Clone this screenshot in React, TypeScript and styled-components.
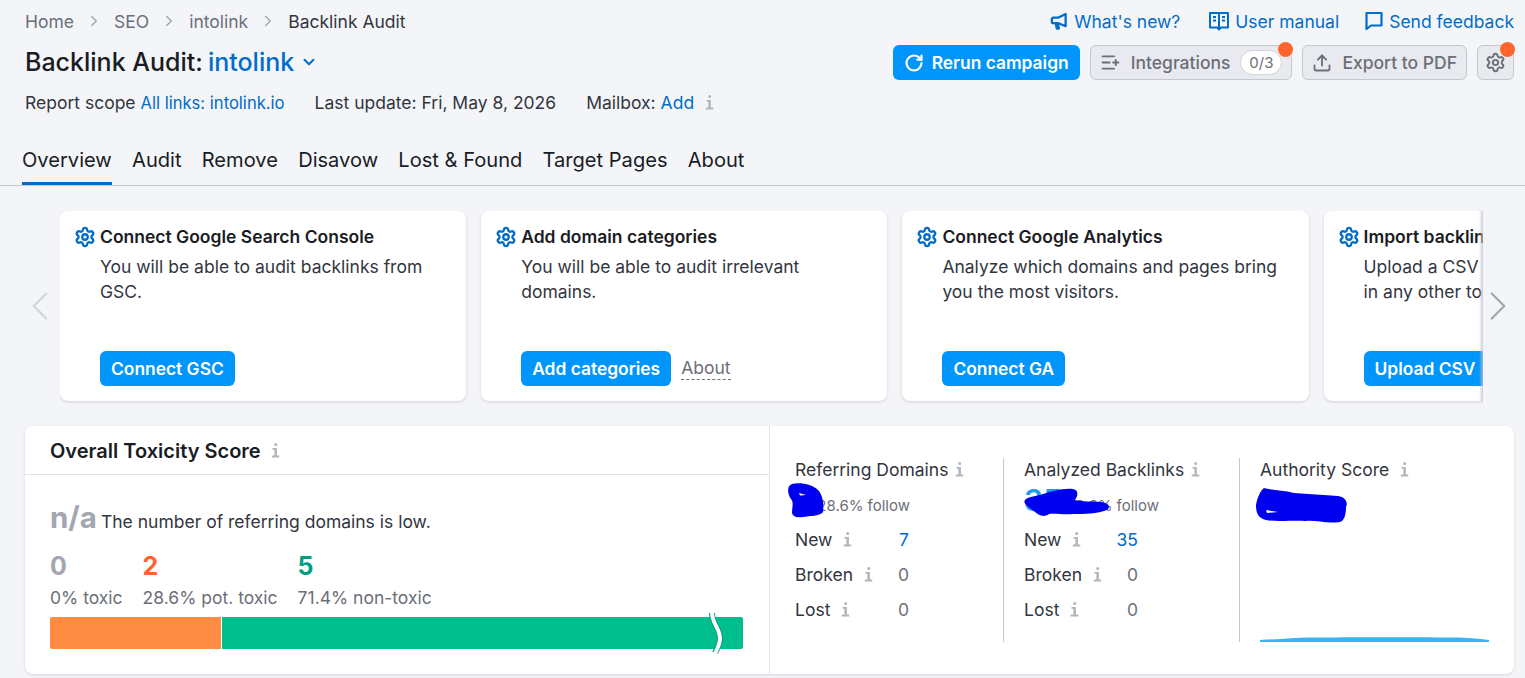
import React from "react"
import styled, { createGlobalStyle } from "styled-components"
import { ChevronDown, ChevronLeft, ChevronRight, ListPlus, RotateCw, Settings, Upload } from "lucide-react"

const GlobalStyle = createGlobalStyle`
  html, body {
    margin: 0;
    padding: 0;
    background: #f4f5f9;
  }
  body {
    font-family: Inter, "Liberation Sans", sans-serif;
    font-size: 17.5px;
    color: #1a1c24;
    overflow: hidden;
  }
`

const Page = styled.div`
  width: 1525px;
  height: 678px;
  overflow: hidden;
`

const Header = styled.header`
  display: flex;
  justify-content: space-between;
  padding: 10px 11px 0 25px;
  height: 125px;
  box-sizing: border-box;
`

const HeaderLeft = styled.div`
  display: flex;
  flex-direction: column;
`

const Breadcrumbs = styled.nav`
  display: flex;
  align-items: center;
  height: 22px;
  color: #6c6e79;
`

const Crumb = styled.span<{ $current?: boolean }>`
  color: ${(p) => (p.$current ? "#33353f" : "#6c6e79")};
`

const CrumbSeparator = styled(ChevronRight)`
  color: #a4a6b0;
  margin: 0 11px;
`

const Title = styled.h1`
  display: flex;
  align-items: center;
  margin: 13px 0 0;
  height: 34px;
  font-size: 25px;
  font-weight: 500;
  color: #1a1c24;
`

const TitleLink = styled.span`
  color: #006dca;
  margin-left: 5px;
`

const TitleChevron = styled(ChevronDown)`
  color: #006dca;
  margin-left: 6px;
`

const Meta = styled.div`
  display: flex;
  align-items: center;
  height: 22px;
  margin-top: 12px;
  color: #33353f;
`

const MetaItem = styled.span`
  margin-right: 30px;
`

const MetaLink = styled.span`
  color: #006dca;
`

const ScopeLink = styled(MetaLink)`
  font-size: 16.6px;
`

const MetaInfo = styled.span`
  display: flex;
  margin-left: 11px;
`

const HeaderRight = styled.div`
  display: flex;
  flex-direction: column;
  align-items: flex-end;
`

const TopLinks = styled.div`
  display: flex;
  align-items: center;
  gap: 26px;
  height: 22px;
`

const TopLink = styled.a`
  display: flex;
  align-items: center;
  gap: 6px;
  color: #006dca;

  &:first-child {
    margin-right: 3px;
  }
`

const Actions = styled.div`
  display: flex;
  gap: 10px;
  margin-top: 13px;
`

const PrimaryAction = styled.button`
  display: flex;
  align-items: center;
  gap: 8px;
  height: 35px;
  padding: 0 11px;
  border: 0;
  border-radius: 6px;
  background: #0095fa;
  color: #fff;
  font: 600 17.4px Inter, sans-serif;
  white-space: nowrap;
`

const GhostAction = styled.button<{ $compact?: boolean }>`
  position: relative;
  display: flex;
  align-items: center;
  gap: 10px;
  height: 35px;
  padding: 0 ${(p) => (p.$compact ? "7px" : "9px")};
  box-sizing: border-box;
  border: 1px solid #c4c7cf;
  border-radius: 6px;
  background: #e9eaef;
  color: #6c6e79;
  font: 500 17.5px Inter, sans-serif;
  white-space: nowrap;
`

const CountPill = styled.span`
  display: inline-flex;
  align-items: center;
  justify-content: center;
  width: 42px;
  height: 25px;
  box-sizing: border-box;
  border: 1px solid #d1d4db;
  border-radius: 13px;
  background: #fff;
  font-size: 15px;
  font-weight: 400;
  color: #6c6e79;
`

const Dot = styled.span`
  position: absolute;
  top: -4px;
  right: -2px;
  width: 15px;
  height: 15px;
  border-radius: 50%;
  background: #ff642d;
`

const Tabs = styled.nav`
  display: flex;
  gap: 20.2px;
  height: 60px;
  padding-left: 22px;
  border-bottom: 1px solid #c4c7cf;
`

const Tab = styled.a<{ $active?: boolean }>`
  display: flex;
  align-items: center;
  height: 45px;
  padding-top: 12px;
  border-bottom: 3px solid ${(p) => (p.$active ? "#006dca" : "transparent")};
  font-size: 20.1px;
  color: #1a1c24;
`

const Carousel = styled.section`
  display: grid;
  grid-template-columns: 60px 1fr 42px;
  margin-top: 25px;
  height: 193px;
`

const ArrowSlot = styled.div<{ $side: "left" | "right" }>`
  display: flex;
  align-items: center;
  justify-content: center;
  height: 190px;
  padding: ${(p) => (p.$side === "left" ? "0 0 0 20px" : "0 12px 0 0")};
  color: ${(p) => (p.$side === "left" ? "#d1d4db" : "#a4a6b0")};

  svg {
    flex: none;
  }
`

const CardWindow = styled.div`
  position: relative;
  display: flex;
  gap: 15px;
  overflow: hidden;
  padding-bottom: 3px;

  &::after {
    content: "";
    position: absolute;
    top: 0;
    right: 0;
    bottom: 3px;
    width: 4px;
    background: linear-gradient(to right, rgba(190, 192, 200, 0), rgba(190, 192, 200, 0.8));
  }
`

const Card = styled.article`
  flex: 0 0 406.2px;
  display: flex;
  height: 190px;
  padding: 15px 15px 15px 14px;
  box-sizing: border-box;
  gap: 4px;
  border-radius: 8px;
  background: #fff;
  box-shadow: 0 1px 3px rgba(25, 27, 35, 0.16);
`

const CardBody = styled.div`
  display: flex;
  flex: 1 0 auto;
  width: 346px;
  flex-direction: column;
`

const CardIcon = styled(Settings)`
  flex: none;
  color: #006dca;
`

const CardTitle = styled.h3`
  margin: 0;
  font-size: 17.5px;
  line-height: 22px;
  font-weight: 600;
  white-space: nowrap;
  color: #1a1c24;
`

const CardText = styled.p`
  margin: 6px 0 0;
  font-size: 17.5px;
  line-height: 25px;
  white-space: nowrap;
  color: #33353f;
`

const CardActions = styled.div`
  display: flex;
  align-items: center;
  gap: 10px;
  margin-top: auto;
`

const CardButton = styled.button`
  height: 35px;
  padding: 0 11px;
  border: 0;
  border-radius: 6px;
  background: #0095fa;
  color: #fff;
  font: 600 17.4px Inter, sans-serif;
  white-space: nowrap;
`

const DashedLink = styled.span`
  color: #6c6e79;
  line-height: 22px;
  border-bottom: 1px dashed #6c6e79;
`

const Panel = styled.section`
  display: flex;
  height: 248px;
  margin: 22px 11px 0 25px;
  border-radius: 8px;
  background: #fff;
  box-shadow: 0 1px 3px rgba(25, 27, 35, 0.14);
`

const ToxicityColumn = styled.div`
  flex: 0 0 745px;
  box-sizing: border-box;
  border-right: 1px solid #e0e1e9;
`

const ToxicityHeader = styled.div`
  display: flex;
  align-items: center;
  gap: 10px;
  height: 49px;
  box-sizing: border-box;
  padding: 1px 0 0 25px;
  border-bottom: 1px solid #e0e1e9;
`

const ToxicityTitle = styled.h2`
  margin: 0;
  font-size: 20px;
  font-weight: 600;
  color: #1a1c24;
`

const ToxicityBody = styled.div`
  padding: 24px 26px 0 25px;
`

const ScoreLine = styled.div`
  display: flex;
  align-items: baseline;
  gap: 4px;
  height: 38px;
  color: #33353f;
`

const ScoreValue = styled.span`
  font-size: 29.5px;
  font-weight: 700;
  color: #a4a6b0;
`

const Splits = styled.div`
  display: flex;
  gap: 20px;
  margin-top: 14px;
`

const Split = styled.div`
  display: flex;
  flex-direction: column;
`

const SplitCount = styled.span<{ $color: string }>`
  height: 36px;
  line-height: 30px;
  font-size: 25px;
  font-weight: 700;
  color: ${(p) => p.$color};
`

const SplitLabel = styled.span`
  line-height: 22px;
  color: #6c6e79;
`

const Bar = styled.div`
  position: relative;
  display: flex;
  height: 32px;
  margin-top: 8px;
`

const BarPart = styled.div<{ $color: string; $grow?: boolean }>`
  flex: ${(p) => (p.$grow ? "1" : "0 0 171px")};
  margin-left: ${(p) => (p.$grow ? "1px" : "0")};
  background: ${(p) => p.$color};
  border-radius: ${(p) => (p.$grow ? "0 2px 2px 0" : "2px 0 0 2px")};
`

const BarBreak = styled.svg`
  position: absolute;
  left: 658px;
  top: -5px;
`

const StatsArea = styled.div`
  display: flex;
  flex: 1;
  padding: 32px 25px 32px 25px;
`

const StatColumn = styled.div<{ $width: string; $divided?: boolean }>`
  position: relative;
  flex: ${(p) => p.$width};
  box-sizing: border-box;
  padding-left: ${(p) => (p.$divided ? "20px" : "0")};
  border-left: ${(p) => (p.$divided ? "1px solid #c4c7cf" : "0")};
`

const StatHeading = styled.div<{ $gap?: number }>`
  display: flex;
  align-items: center;
  gap: ${(p) => p.$gap ?? 7}px;
  height: 24px;
  margin-top: -1px;
  color: #33353f;
  white-space: nowrap;
`

const FollowLine = styled.div<{ $width: number }>`
  display: flex;
  justify-content: space-between;
  align-items: center;
  width: ${(p) => p.$width}px;
  height: 32px;
  margin-top: 8px;
`

const BigNumber = styled.span`
  margin-top: -10px;
  font-size: 30px;
  font-weight: 600;
  color: #1a9cf0;
`

const FollowText = styled.span`
  font-size: 15px;
  color: #6c6e79;
`

const StatRows = styled.div`
  margin-top: 1px;
`

const StatRow = styled.div`
  display: flex;
  align-items: center;
  justify-content: space-between;
  width: 114px;
  height: 35px;
  color: #33353f;
`

const StatLabel = styled.span`
  display: flex;
  align-items: center;
  gap: 11px;
`

const StatValue = styled.span<{ $link?: boolean }>`
  color: ${(p) => (p.$link ? "#006dca" : "#6c6e79")};
`

const Scribble = styled.svg<{ $left: number; $top: number }>`
  position: absolute;
  left: ${(p) => p.$left}px;
  top: ${(p) => p.$top}px;
  pointer-events: none;
`

const AreaChart = styled.svg`
  position: absolute;
  left: 20px;
  bottom: 0;
`

const InfoIcon = () => (
  <svg width="9" height="15" viewBox="0 0 9 15" fill="#b3b5bd">
    <circle cx="4.7" cy="1.6" r="1.5" />
    <path d="M1.5 5h4.4v7.6h2.3V14.5H.8v-1.9h2.6V6.8H1.5z" />
  </svg>
)

const MegaphoneIcon = () => (
  <svg width="18" height="20" viewBox="0 0 19 20" fill="none" stroke="#006dca" strokeWidth="2.4" strokeLinejoin="round">
    <path d="M16.5 2.5v13L9 12.3H3.6a1.6 1.6 0 0 1-1.6-1.6V8a1.6 1.6 0 0 1 1.6-1.6H9z" />
    <path d="M6 12.5l1.2 5.5h2.2l-.9-5" />
  </svg>
)

const BookIcon = () => (
  <svg width="20" height="20" viewBox="0 0 20 20" fill="none">
    <path d="M1 2h18v14.5h-7l-2 2-2-2H1z" stroke="#006dca" strokeWidth="2" strokeLinejoin="round" />
    <path d="M10 2v15" stroke="#006dca" strokeWidth="2" />
    <path d="M4 6h3M4 9.5h3M13 6h3M13 9.5h3" stroke="#006dca" strokeWidth="2" />
  </svg>
)

const FeedbackIcon = () => (
  <svg width="18" height="20" viewBox="0 0 18 20" fill="none">
    <path d="M1.5 2h15v12.5H6L1.5 18z" stroke="#006dca" strokeWidth="2.2" strokeLinejoin="round" />
  </svg>
)

const cards = [
  {
    title: "Connect Google Search Console",
    text: ["You will be able to audit backlinks from", "GSC."],
    action: "Connect GSC",
  },
  {
    title: "Add domain categories",
    text: ["You will be able to audit irrelevant", "domains."],
    action: "Add categories",
    about: true,
  },
  {
    title: "Connect Google Analytics",
    text: ["Analyze which domains and pages bring", "you the most visitors."],
    action: "Connect GA",
  },
  {
    title: "Import backlinks",
    text: ["Upload a CSV file with backlinks found", "in any other tool."],
    action: "Upload CSV",
  },
]

const tabs = ["Overview", "Audit", "Remove", "Disavow", "Lost & Found", "Target Pages", "About"]

const StatList = ({ newCount }: { newCount: number }) => (
  <StatRows>
    <StatRow>
      <StatLabel>New <InfoIcon /></StatLabel>
      <StatValue $link>{newCount}</StatValue>
    </StatRow>
    <StatRow>
      <StatLabel>Broken <InfoIcon /></StatLabel>
      <StatValue>0</StatValue>
    </StatRow>
    <StatRow>
      <StatLabel>Lost <InfoIcon /></StatLabel>
      <StatValue>0</StatValue>
    </StatRow>
  </StatRows>
)

export default function App() {
  return (
    <Page>
      <GlobalStyle />
      <Header>
        <HeaderLeft>
          <Breadcrumbs>
            <Crumb>Home</Crumb>
            <CrumbSeparator size={18} />
            <Crumb>SEO</Crumb>
            <CrumbSeparator size={18} />
            <Crumb>intolink</Crumb>
            <CrumbSeparator size={18} />
            <Crumb $current>Backlink Audit</Crumb>
          </Breadcrumbs>
          <Title>
            Backlink Audit: <TitleLink>intolink</TitleLink>
            <TitleChevron size={18} strokeWidth={2.6} />
          </Title>
          <Meta>
            <MetaItem>
              Report scope <ScopeLink>All links: intolink.io</ScopeLink>
            </MetaItem>
            <MetaItem>Last update: Fri, May 8, 2026</MetaItem>
            <span>Mailbox: <MetaLink>Add</MetaLink></span>
            <MetaInfo><InfoIcon /></MetaInfo>
          </Meta>
        </HeaderLeft>
        <HeaderRight>
          <TopLinks>
            <TopLink><MegaphoneIcon />What's new?</TopLink>
            <TopLink><BookIcon />User manual</TopLink>
            <TopLink><FeedbackIcon />Send feedback</TopLink>
          </TopLinks>
          <Actions>
            <PrimaryAction>
              <RotateCw size={20} strokeWidth={2.6} />
              Rerun campaign
            </PrimaryAction>
            <GhostAction>
              <ListPlus size={21} strokeWidth={2.2} />
              Integrations
              <CountPill>0/3</CountPill>
              <Dot />
            </GhostAction>
            <GhostAction>
              <Upload size={20} strokeWidth={2.2} />
              Export to PDF
            </GhostAction>
            <GhostAction $compact>
              <Settings size={21} strokeWidth={2.2} />
              <Dot />
            </GhostAction>
          </Actions>
        </HeaderRight>
      </Header>

      <Tabs>
        {tabs.map((tab, i) => (
          <Tab key={tab} $active={i === 0}>{tab}</Tab>
        ))}
      </Tabs>

      <Carousel>
        <ArrowSlot $side="left">
          <ChevronLeft size={50} strokeWidth={1.1} />
        </ArrowSlot>
        <CardWindow>
          {cards.map((card) => (
            <Card key={card.title}>
              <CardIcon size={22} strokeWidth={2.5} />
              <CardBody>
                <CardTitle>{card.title}</CardTitle>
                <CardText>
                  {card.text[0]}
                  <br />
                  {card.text[1]}
                </CardText>
                <CardActions>
                  <CardButton>{card.action}</CardButton>
                  {card.about && <DashedLink>About</DashedLink>}
                </CardActions>
              </CardBody>
            </Card>
          ))}
        </CardWindow>
        <ArrowSlot $side="right">
          <ChevronRight size={50} strokeWidth={1.1} />
        </ArrowSlot>
      </Carousel>

      <Panel>
        <ToxicityColumn>
          <ToxicityHeader>
            <ToxicityTitle>Overall Toxicity Score</ToxicityTitle>
            <InfoIcon />
          </ToxicityHeader>
          <ToxicityBody>
            <ScoreLine>
              <ScoreValue>n/a</ScoreValue>
              The number of referring domains is low.
            </ScoreLine>
            <Splits>
              <Split>
                <SplitCount $color="#a4a6b0">0</SplitCount>
                <SplitLabel>0% toxic</SplitLabel>
              </Split>
              <Split>
                <SplitCount $color="#ff642d">2</SplitCount>
                <SplitLabel>28.6% pot. toxic</SplitLabel>
              </Split>
              <Split>
                <SplitCount $color="#009f81">5</SplitCount>
                <SplitLabel>71.4% non-toxic</SplitLabel>
              </Split>
            </Splits>
            <Bar>
              <BarPart $color="#ff8c43" />
              <BarPart $color="#00bf8f" $grow />
              <BarBreak width="16" height="42" viewBox="0 0 16 42" fill="none">
                <path d="M4 1C4 13 12 15 12 27C12 32 9 37 7 41" stroke="#00a07c" strokeWidth="6" />
                <path d="M4 0C4 13 12 15 12 27C12 32 9 37 7 42" stroke="#fff" strokeWidth="4" />
              </BarBreak>
            </Bar>
          </ToxicityBody>
        </ToxicityColumn>

        <StatsArea>
          <StatColumn $width="0 0 208px">
            <StatHeading>Referring Domains <InfoIcon /></StatHeading>
            <FollowLine $width={115}>
              <BigNumber>7</BigNumber>
              <FollowText>28.6% follow</FollowText>
            </FollowLine>
            <StatList newCount={7} />
            <Scribble $left={-8} $top={25} width="38" height="35" viewBox="0 0 38 35">
              <path d="M5 1C14 -1 26 2 31 7C36 12 37 22 36 29C34 33 22 33 16 34C10 35 6 34 5 30C5 24 7 20 4 16C1 12 -1 3 5 1Z" fill="#0000f0" />
              <path d="M12 10L19 12L13 12.5Z" fill="#fff" />
            </Scribble>
          </StatColumn>
          <StatColumn $width="0 0 236px" $divided>
            <StatHeading>Analyzed Backlinks <InfoIcon /></StatHeading>
            <FollowLine $width={135}>
              <BigNumber>35</BigNumber>
              <FollowText>28.6% follow</FollowText>
            </FollowLine>
            <StatList newCount={35} />
            <Scribble $left={19} $top={30} width="90" height="30" viewBox="0 0 90 30">
              <path d="M3 11C8 8 14 8 20 6C28 4 38 0 50 1C56 2 55 8 52 12C58 14 70 13 78 14C86 15 88 19 84 22C74 26 62 26 50 26C40 27 32 25 26 26C20 30 16 27 12 24C6 19 -2 15 3 11Z" fill="#0000f0" />
            </Scribble>
          </StatColumn>
          <StatColumn $width="1" $divided>
            <StatHeading $gap={11}>Authority Score <InfoIcon /></StatHeading>
            <Scribble $left={16} $top={29} width="92" height="36" viewBox="0 0 92 36">
              <path d="M8 1C14 3 26 3 38 6C52 7 68 8 82 9C90 10 92 16 90 20C90 28 88 34 84 35C70 37 60 33 50 34C40 33 20 35 10 33C2 31 0 26 0 18C1 12 4 4 8 1Z" fill="#0000f0" />
              <path d="M10 23L22 25L11 26Z" fill="#fff" />
            </Scribble>
            <AreaChart width="229" height="5" viewBox="0 0 230 5">
              <path d="M0 3C20 2 35 1 50 0.5C90 0 170 0 200 0.5C212 1 222 2 230 3V5H0Z" fill="#35b5f5" />
            </AreaChart>
          </StatColumn>
        </StatsArea>
      </Panel>
    </Page>
  )
}
